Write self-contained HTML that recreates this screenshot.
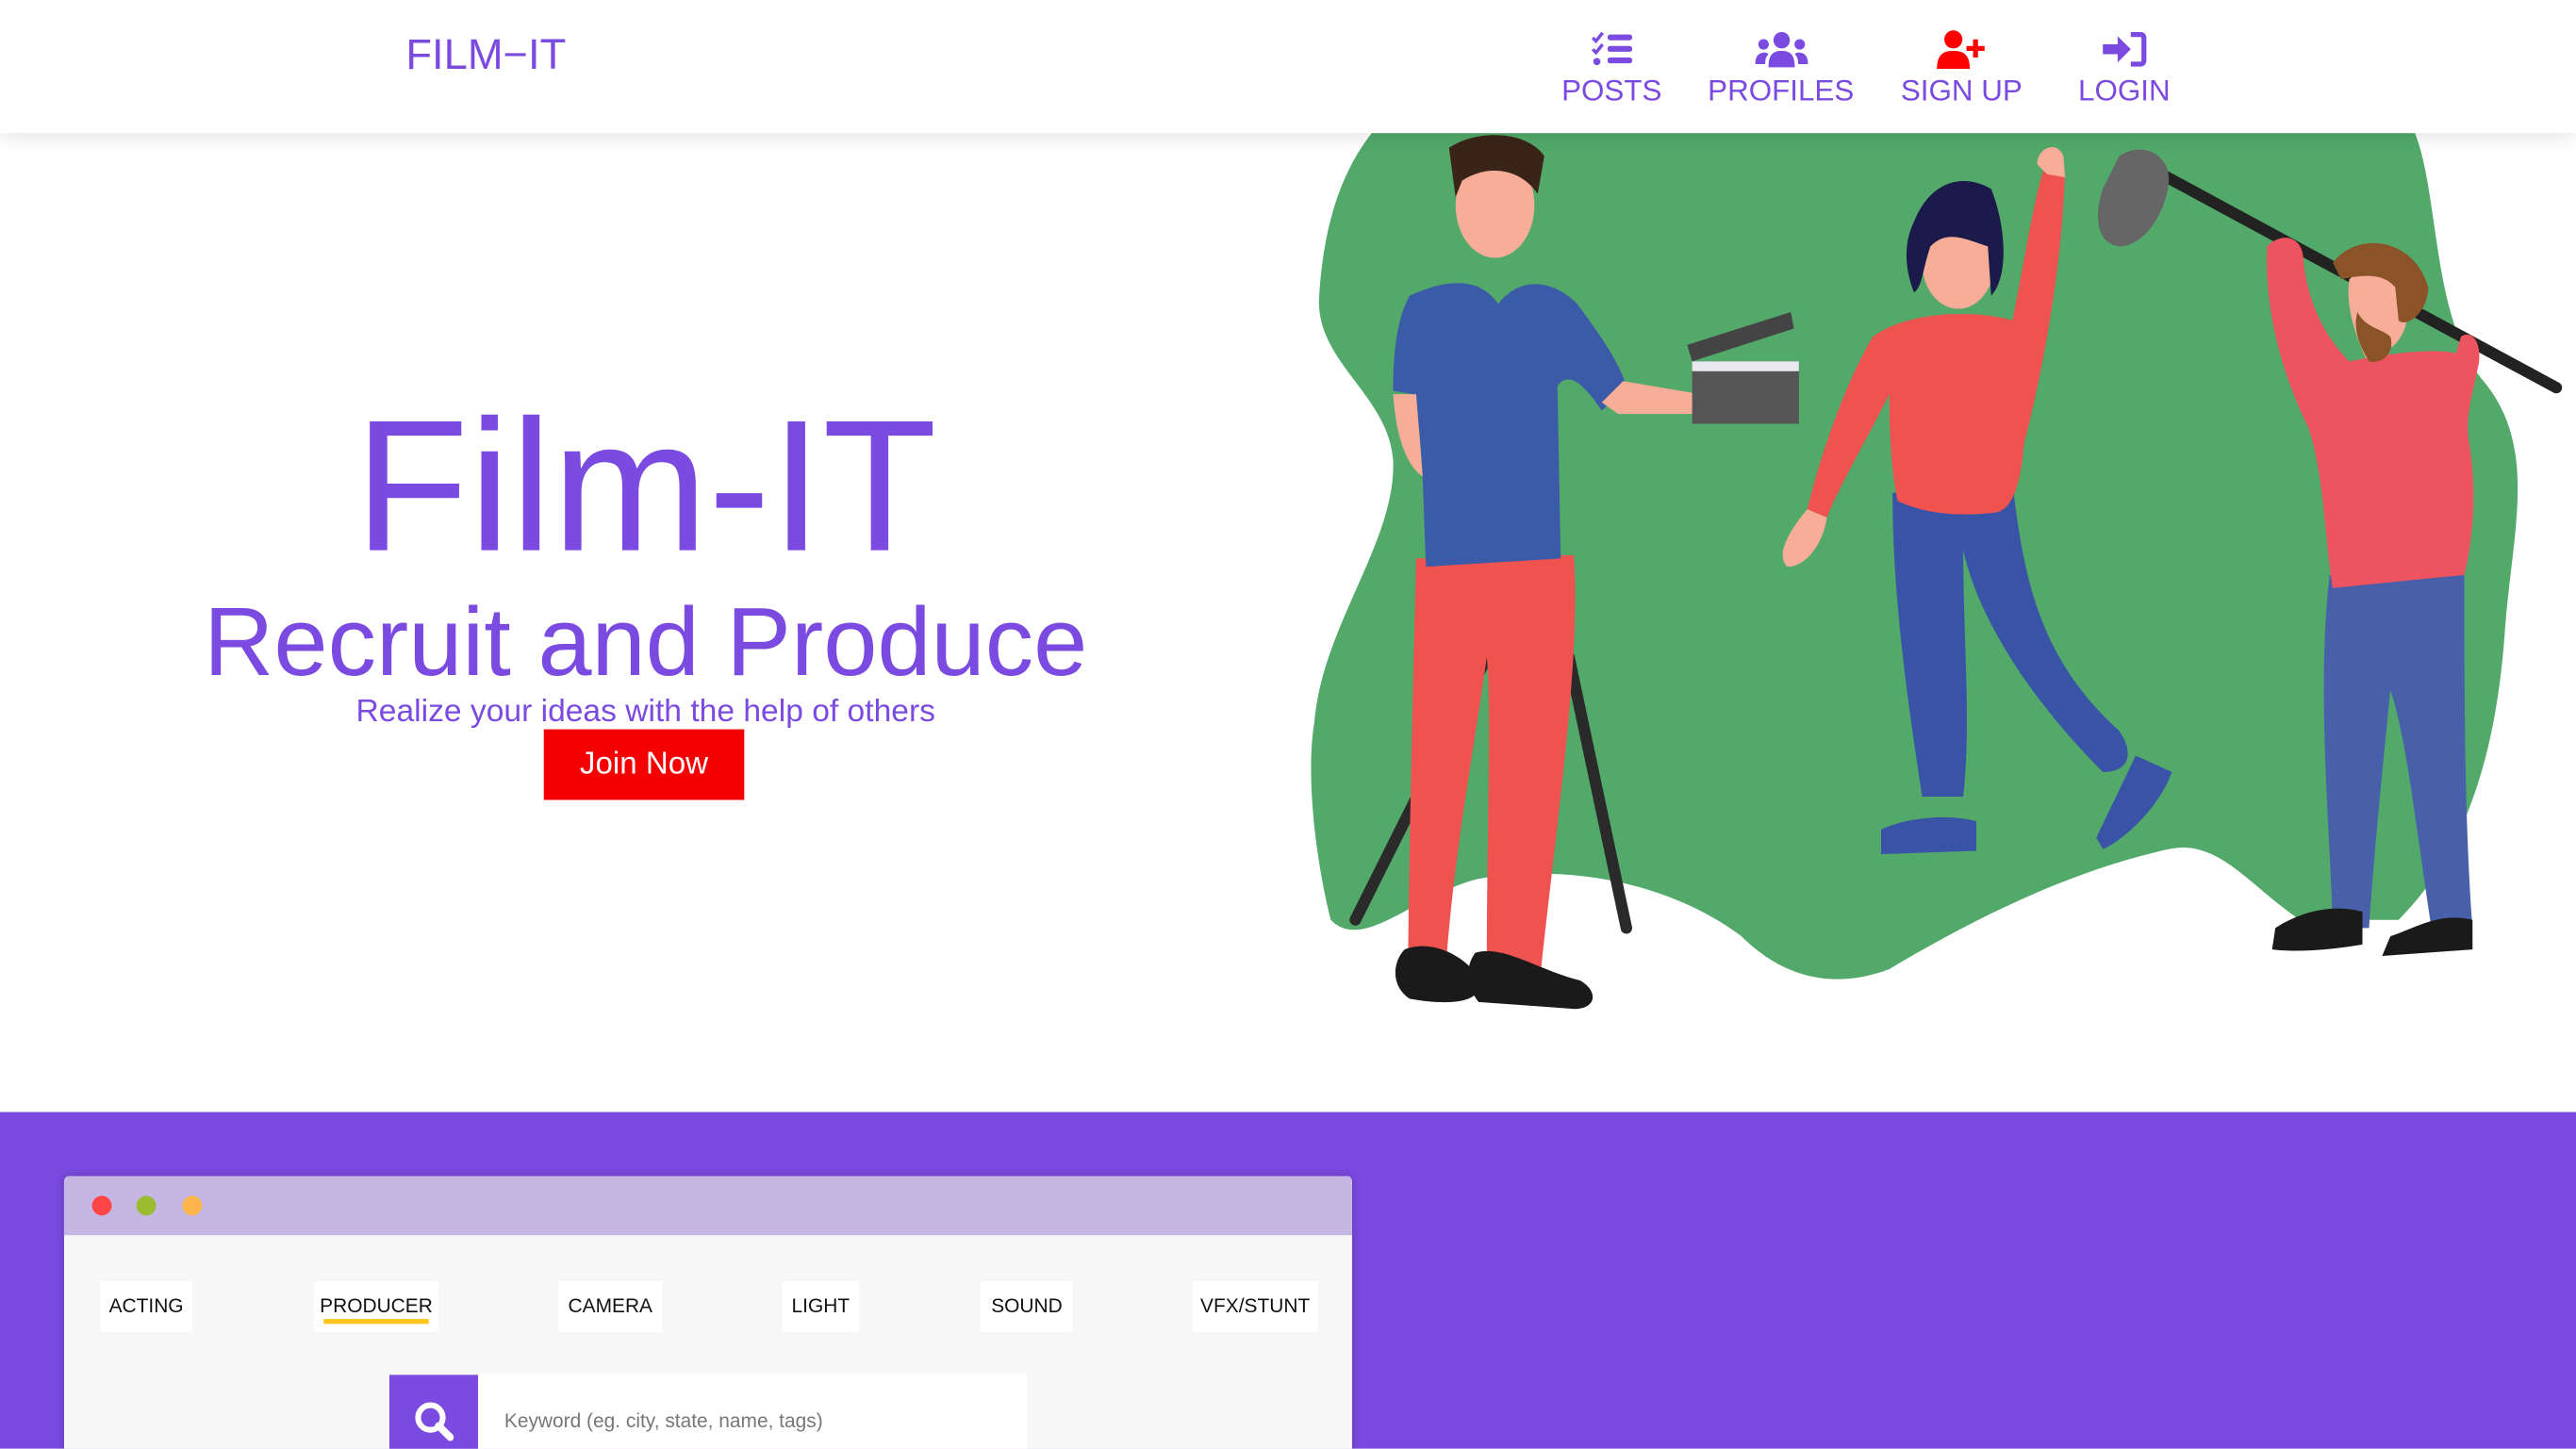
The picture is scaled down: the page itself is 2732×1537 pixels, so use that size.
<!DOCTYPE html>
<html><head><meta charset="utf-8">
<style>
html,body{margin:0;padding:0;width:2732px;height:1536px;overflow:hidden;background:#fff;font-family:"Liberation Sans",sans-serif}
#s{position:absolute;left:0;top:0;width:1568px;height:882px;transform:scale(1.74235);transform-origin:0 0;overflow:hidden;background:#fff}
.a{position:absolute}
.nav{left:0;top:0;width:1568px;height:81px;background:#fff;box-shadow:0 2px 12px rgba(0,0,0,.12);z-index:5}
.logo{left:247px;top:18px;font-size:26px;color:#7b4ae0;letter-spacing:0}
.ni{top:18px;text-align:center;color:#7b4ae0;font-size:18px;transform:translateX(-50%)}
.ni svg{display:block;margin:0 auto 3px}
.c{color:#7b4ae0;text-align:center;width:786px;left:0}
.tab{top:780px;height:31px;background:#fff;font-size:12px;color:#111;line-height:31px;text-align:center}
</style></head><body><div id="s">
<svg class="a" style="left:0;top:0" width="1568" height="882" viewBox="0 0 1568 882">
<path fill="#52a96a" d="M835,81 L1470,81 C1485,120 1480,190 1510,230 C1545,270 1530,320 1525,380 C1520,460 1500,520 1460,560 L1400,560 C1370,540 1350,510 1320,517 C1260,530 1200,560 1150,590 C1110,605 1080,590 1060,570 C1020,540 960,525 900,535 C860,545 830,580 810,560 C800,520 795,470 800,440 C805,380 850,330 848,280 C845,240 800,220 803,180 C806,130 820,100 835,81Z"/>
<path stroke="#2a2a2a" stroke-width="7" stroke-linecap="round" fill="none" d="M905,400 L825,560 M955,400 L990,565"/>
<path fill="#ef5350" d="M862,340 L958,338 C962,400 950,480 938,590 L905,590 C905,500 908,430 905,400 C895,470 885,520 880,590 L857,590 C858,500 860,420 862,340Z"/>
<path fill="#1a1a1a" d="M855,578 C870,572 890,580 900,595 C905,612 880,612 858,608 C846,600 848,585 855,578Z M898,580 C915,575 935,590 962,597 C975,605 970,616 955,614 L900,610 C892,600 892,588 898,580Z"/>
<path fill="#3b5ba8" d="M858,180 C880,170 900,168 912,185 C925,168 945,170 960,185 C975,205 985,220 990,235 L975,250 C965,235 955,225 948,235 L950,340 L868,345 C866,300 866,260 860,240 L848,238 C848,215 850,195 858,180Z"/>
<path fill="#f7ad97" d="M848,240 L862,240 L866,290 C858,285 850,270 848,240Z M975,245 L988,232 L1035,240 L1040,252 L985,252Z"/>
<ellipse cx="910" cy="125" rx="24" ry="32" fill="#f7ad97"/>
<path fill="#3a2418" d="M882,90 C900,78 930,80 940,95 L936,118 C925,102 905,100 890,110 L886,120Z"/>
<path fill="#444" d="M1027,210 L1090,190 L1092,200 L1030,220Z"/>
<rect x="1030" y="220" width="65" height="38" fill="#555"/><rect x="1030" y="220" width="65" height="6" fill="#e8e8ee"/>
<path fill="#3954a6" d="M1152,300 L1225,295 C1232,350 1240,400 1290,445 C1300,460 1295,470 1280,470 C1240,430 1205,380 1195,335 C1195,390 1200,440 1195,485 L1170,485 C1160,420 1152,360 1152,300Z"/>
<path fill="#3954a6" d="M1145,505 C1160,498 1185,495 1203,500 L1203,518 L1145,520Z M1300,460 L1322,470 C1315,490 1295,510 1280,517 L1276,510Z"/>
<path fill="#ef5350" d="M1140,205 C1160,190 1200,188 1225,195 C1232,160 1238,120 1245,100 L1257,105 C1255,160 1245,220 1232,270 C1230,295 1225,310 1215,312 C1190,315 1170,312 1155,305 C1150,280 1150,250 1150,240 C1135,270 1120,295 1112,315 L1100,310 C1110,270 1125,230 1140,205Z"/>
<path fill="#f7ad97" d="M1100,310 L1112,315 C1110,330 1100,345 1088,345 C1080,338 1090,322 1100,310Z M1240,100 C1240,90 1252,85 1256,95 L1257,108 L1246,106Z"/>
<ellipse cx="1192" cy="160" rx="22" ry="28" fill="#f7ad97"/>
<path fill="#1c1a4a" d="M1165,135 C1175,110 1195,105 1212,115 C1222,140 1222,170 1212,180 L1210,150 C1195,145 1185,140 1175,150 C1170,165 1170,175 1165,178 C1158,160 1160,145 1165,135Z"/>
<path stroke="#222" stroke-width="7" stroke-linecap="round" d="M1310,103 L1556,236"/>
<path fill="#666" d="M1290,95 C1305,85 1322,95 1320,112 C1318,130 1305,150 1290,150 C1275,148 1275,130 1280,115Z"/>
<path fill="#4760a9" d="M1418,350 L1500,345 C1500,420 1500,500 1505,565 L1480,565 C1470,500 1465,450 1455,420 C1450,470 1445,520 1442,565 L1420,565 C1418,500 1410,420 1418,350Z"/>
<path fill="#1a1a1a" d="M1385,565 C1400,555 1420,550 1438,555 L1438,575 C1420,578 1400,580 1383,578Z M1455,570 C1470,565 1485,555 1505,560 L1505,578 L1450,582Z"/>
<path fill="#ee5360" d="M1380,150 C1390,140 1402,145 1402,158 C1405,190 1420,210 1430,220 C1455,215 1480,212 1495,215 L1498,205 C1505,200 1512,210 1508,225 C1505,240 1500,255 1503,270 C1508,300 1505,330 1500,350 L1420,358 C1415,330 1415,290 1405,260 C1390,230 1378,190 1380,150Z"/>
<path fill="#f7ad97" d="M1430,170 C1440,160 1460,165 1465,180 C1468,200 1460,215 1440,218 C1432,200 1428,185 1430,170Z"/>
<path fill="#8a5428" d="M1420,160 C1435,140 1470,145 1478,175 C1478,190 1465,200 1460,195 L1458,175 C1450,165 1435,168 1425,170Z M1435,190 C1440,200 1450,200 1455,205 C1458,215 1450,222 1442,220 C1436,210 1432,200 1435,190Z"/>
</svg>
<div class="a nav">
<div class="a logo">FILM&#8722;IT</div>
<div class="a ni" style="left:981px"><svg width="26" height="24" viewBox="0 0 26 22" fill="#7b4ae0"><path d="M1,4 L3,6 L7,1" stroke="#7b4ae0" stroke-width="2" fill="none"/><path d="M1,11 L3,13 L7,8" stroke="#7b4ae0" stroke-width="2" fill="none"/><circle cx="3.5" cy="18.5" r="2.2"/><rect x="10" y="2" width="15" height="3.5" rx="1.5"/><rect x="10" y="9" width="15" height="3.5" rx="1.5"/><rect x="10" y="16" width="15" height="3.5" rx="1.5"/></svg>POSTS</div>
<div class="a ni" style="left:1084px"><svg width="34" height="24" viewBox="0 0 34 22" fill="#7b4ae0"><circle cx="17" cy="5.5" r="5"/><circle cx="6" cy="8" r="3.2"/><circle cx="28" cy="8" r="3.2"/><path d="M9,22 C9,14 12,12 17,12 C22,12 25,14 25,22Z M1,20 C1,15 3,13 7,13 C8,13 9,14 9,14 C7,16 7,18 7,20Z M33,20 C33,15 31,13 27,13 C26,13 25,14 25,14 C27,16 27,18 27,20Z"/></svg>PROFILES</div>
<div class="a ni" style="left:1194px"><svg width="34" height="24" viewBox="0 0 34 24" fill="#f00"><circle cx="12" cy="6" r="5.5"/><path d="M2,24 C2,15 6,13 12,13 C18,13 22,15 22,24Z"/><rect x="24" y="6" width="3" height="11"/><rect x="20" y="10" width="11" height="3"/></svg>SIGN UP</div>
<div class="a ni" style="left:1293px"><svg width="28" height="24" viewBox="0 0 28 22" fill="#7b4ae0"><path d="M1,8 L10,8 L10,3 L18,11 L10,19 L10,14 L1,14Z"/><path d="M18,2 L24,2 C25.5,2 26,3 26,4 L26,18 C26,19 25.5,20 24,20 L18,20" stroke="#7b4ae0" stroke-width="3" fill="none"/></svg>LOGIN</div>
</div>
<div class="a c" style="top:232px;font-size:114px;line-height:130px">Film-IT</div>
<div class="a c" style="top:356px;font-size:59px;line-height:70px">Recruit and Produce</div>
<div class="a c" style="top:422px;font-size:19.3px;line-height:24px">Realize your ideas with the help of others</div>
<div class="a" style="left:331px;top:444px;width:122px;height:43px;background:#f40000;color:#fff;font-size:19px;line-height:43px;text-align:center">Join Now</div>
<div class="a" style="left:0;top:677px;width:1568px;height:205px;background:#7b4ae0"></div>
<div class="a" style="left:39px;top:716px;width:784px;height:170px;background:#f7f7f7;border-radius:3px 3px 0 0;box-shadow:0 0 6px rgba(0,0,0,.2)">
<div class="a" style="left:0;top:0;width:784px;height:36px;background:#c6b6e4;border-radius:3px 3px 0 0"></div>
<div class="a" style="left:17px;top:12px;width:12px;height:12px;border-radius:50%;background:#ff4545"></div>
<div class="a" style="left:44px;top:12px;width:12px;height:12px;border-radius:50%;background:#9bbb30"></div>
<div class="a" style="left:72px;top:12px;width:12px;height:12px;border-radius:50%;background:#ffb74d"></div>
</div>
<div class="a tab" style="left:61px;width:56px">ACTING</div>
<div class="a tab" style="left:191px;width:76px">PRODUCER<div class="a" style="left:6px;top:23px;width:64px;height:3px;background:#fbc51b"></div></div>
<div class="a tab" style="left:340px;width:63px">CAMERA</div>
<div class="a tab" style="left:476px;width:47px">LIGHT</div>
<div class="a tab" style="left:597px;width:56px">SOUND</div>
<div class="a tab" style="left:726px;width:76px">VFX/STUNT</div>
<div class="a" style="left:237px;top:837px;width:54px;height:50px;background:#7b4ae0"><svg style="position:absolute;left:15px;top:16px" width="26" height="26" viewBox="0 0 26 26"><circle cx="10" cy="10" r="7.5" stroke="#fff" stroke-width="3.5" fill="none"/><path d="M15,15 L22,22" stroke="#fff" stroke-width="4.5" stroke-linecap="round"/></svg></div>
<div class="a" style="left:291px;top:836px;width:334px;height:50px;background:#fff;font-size:12px;color:#777;line-height:58px;padding-left:16px;box-sizing:border-box">Keyword (eg. city, state, name, tags)</div>
</div></body></html>
